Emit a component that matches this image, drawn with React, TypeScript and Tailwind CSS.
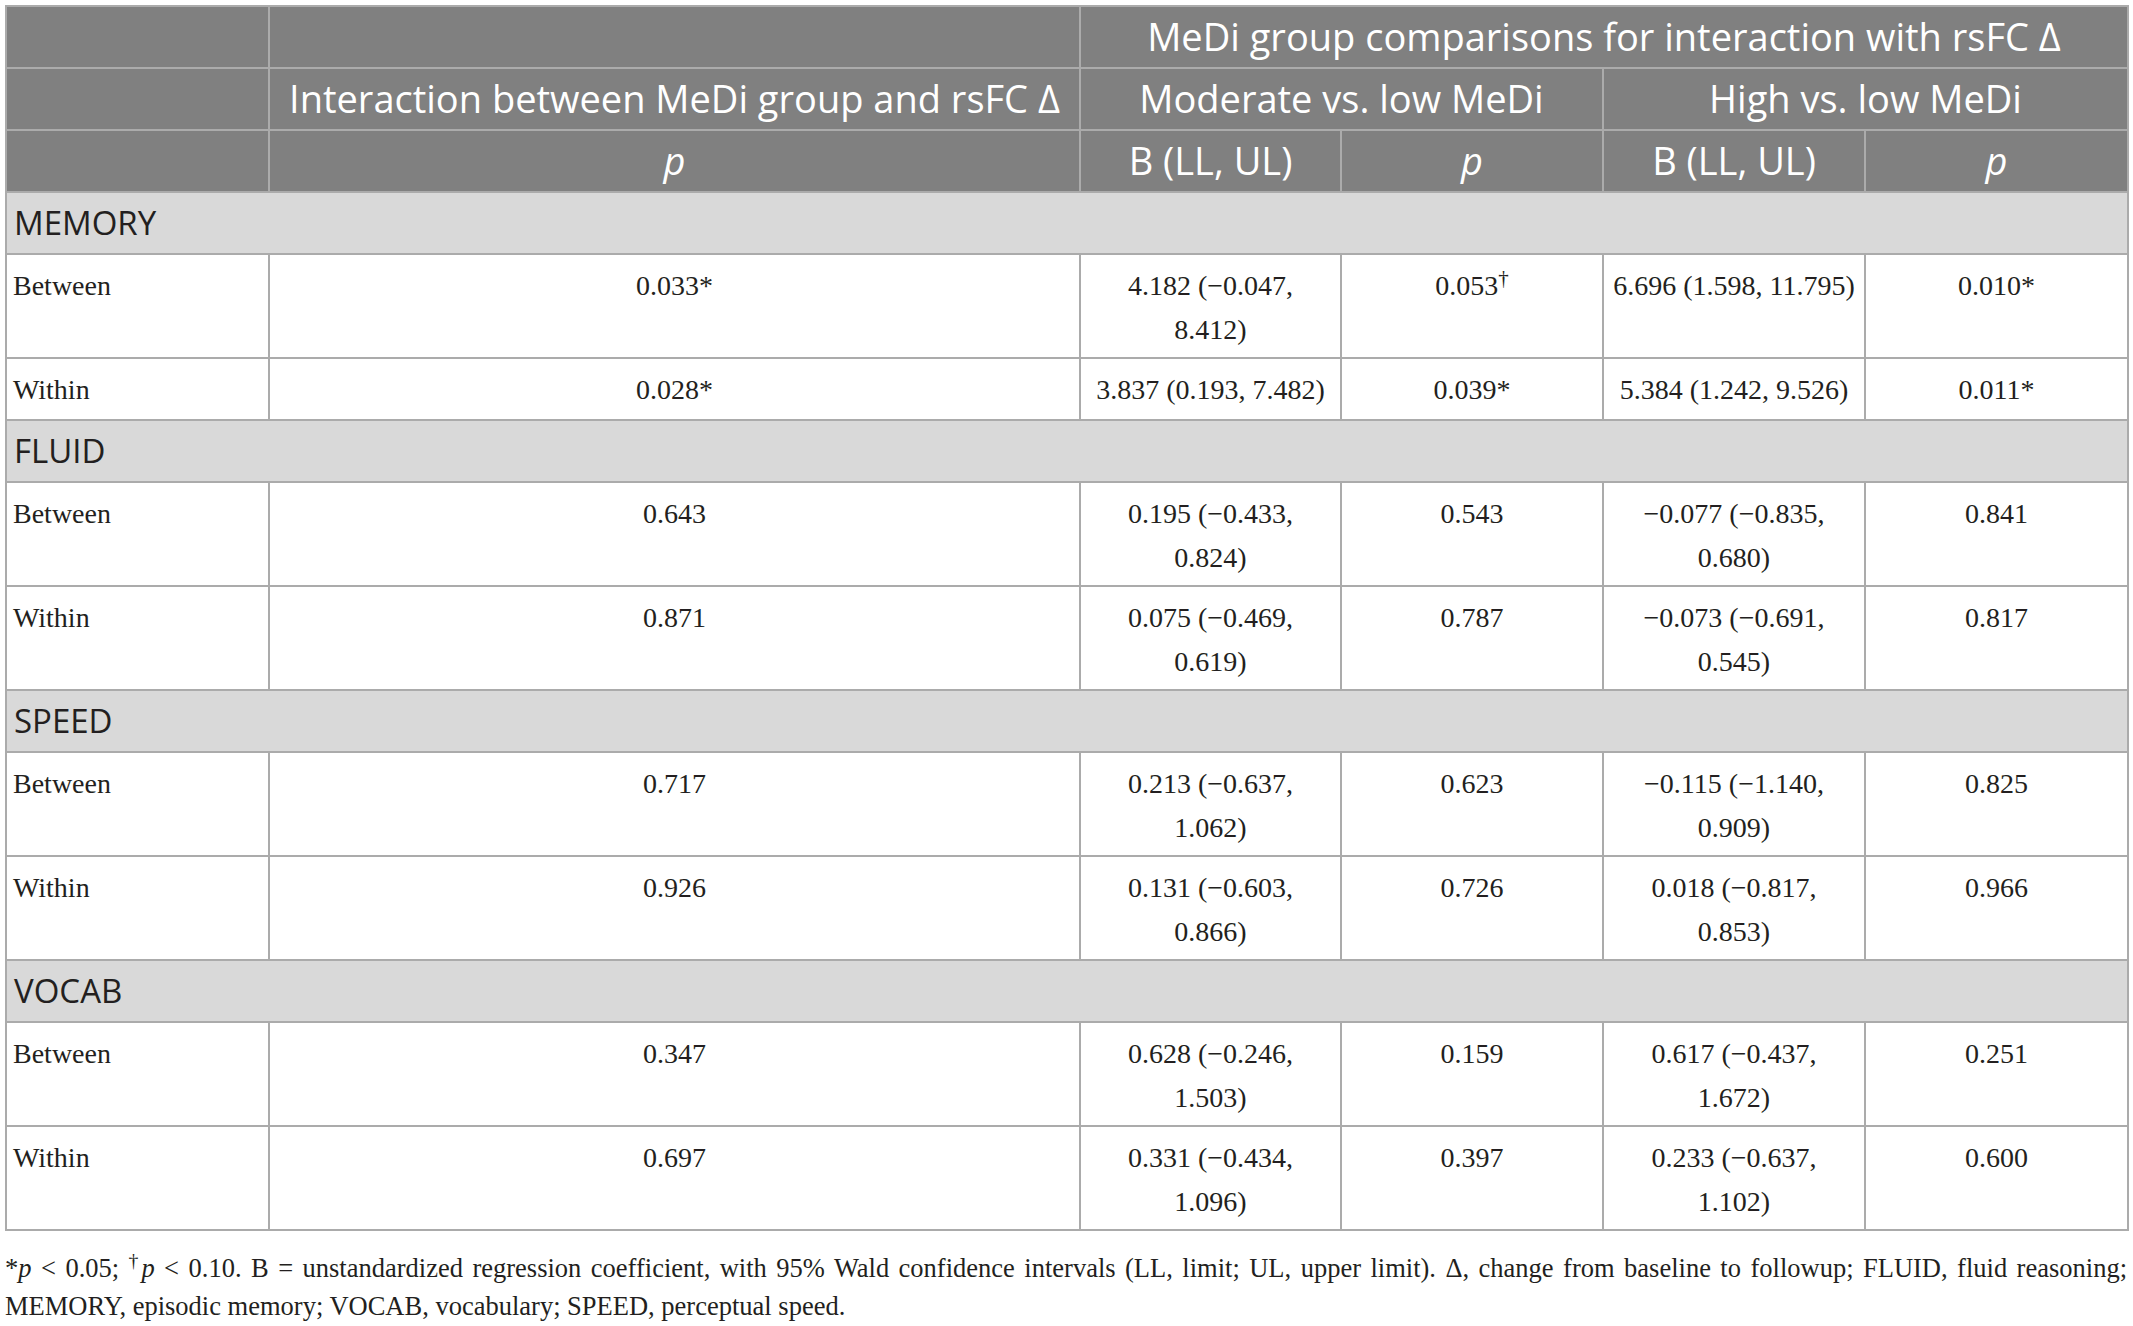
import React from 'react';

type Section = {
    name: string;
    rows: { label: string; cells: string[][] }[];
};

const sections: Section[] = [
    {
        name: 'MEMORY',
        rows: [
            { label: 'Between', cells: [['0.033*'], ['4.182 (−0.047,', '8.412)'], ['0.053†'], ['6.696 (1.598, 11.795)'], ['0.010*']] },
            { label: 'Within', cells: [['0.028*'], ['3.837 (0.193, 7.482)'], ['0.039*'], ['5.384 (1.242, 9.526)'], ['0.011*']] },
        ],
    },
    {
        name: 'FLUID',
        rows: [
            { label: 'Between', cells: [['0.643'], ['0.195 (−0.433,', '0.824)'], ['0.543'], ['−0.077 (−0.835,', '0.680)'], ['0.841']] },
            { label: 'Within', cells: [['0.871'], ['0.075 (−0.469,', '0.619)'], ['0.787'], ['−0.073 (−0.691,', '0.545)'], ['0.817']] },
        ],
    },
    {
        name: 'SPEED',
        rows: [
            { label: 'Between', cells: [['0.717'], ['0.213 (−0.637,', '1.062)'], ['0.623'], ['−0.115 (−1.140,', '0.909)'], ['0.825']] },
            { label: 'Within', cells: [['0.926'], ['0.131 (−0.603,', '0.866)'], ['0.726'], ['0.018 (−0.817,', '0.853)'], ['0.966']] },
        ],
    },
    {
        name: 'VOCAB',
        rows: [
            { label: 'Between', cells: [['0.347'], ['0.628 (−0.246,', '1.503)'], ['0.159'], ['0.617 (−0.437,', '1.672)'], ['0.251']] },
            { label: 'Within', cells: [['0.697'], ['0.331 (−0.434,', '1.096)'], ['0.397'], ['0.233 (−0.637,', '1.102)'], ['0.600']] },
        ],
    },
];

const Value: React.FC<{ text: string }> = ({ text }) =>
    text.endsWith('†') ? (
        <>
            {text.slice(0, -1)}
            <sup>†</sup>
        </>
    ) : (
        <>{text}</>
    );

const hd = 'border-2 border-[#ababab] bg-[#808080] text-white text-center align-middle h-[62px] pb-[2px] font-normal';

export default function App() {
    return (
        <div className="bg-white min-h-screen pl-[5px] pr-[6px] pt-[5px] text-[#231f20]">
            <table className="table-fixed border-collapse w-[2122px]">
                <colgroup>
                    <col className="w-[263px]" />
                    <col className="w-[811px]" />
                    <col className="w-[261px]" />
                    <col className="w-[262px]" />
                    <col className="w-[262px]" />
                    <col className="w-[263px]" />
                </colgroup>
                <thead className="font-['Open_Sans',sans-serif] text-[38px] leading-[44px]">
                    <tr>
                        <th className={hd}></th>
                        <th className={hd}></th>
                        <th className={hd} colSpan={4}>MeDi group comparisons for interaction with rsFC Δ</th>
                    </tr>
                    <tr>
                        <th className={hd}></th>
                        <th className={hd}>Interaction between MeDi group and rsFC Δ</th>
                        <th className={hd} colSpan={2}>Moderate vs. low MeDi</th>
                        <th className={hd} colSpan={2}>High vs. low MeDi</th>
                    </tr>
                    <tr>
                        <th className={hd}></th>
                        <th className={hd}><i>p</i></th>
                        <th className={hd}>B (LL, UL)</th>
                        <th className={hd}><i>p</i></th>
                        <th className={hd}>B (LL, UL)</th>
                        <th className={hd}><i>p</i></th>
                    </tr>
                </thead>
                <tbody>
                    {sections.map(section => (
                        <React.Fragment key={section.name}>
                            <tr>
                                <td
                                    colSpan={6}
                                    className="border-2 border-[#ababab] bg-[#d9d9d9] h-[62px] align-middle pl-[7px] font-['Open_Sans',sans-serif] text-[33px] leading-[40px]"
                                >
                                    {section.name}
                                </td>
                            </tr>
                            {section.rows.map(row => {
                                const tall = row.cells.some(c => c.length > 1);
                                return (
                                    <tr key={row.label} className="font-['Liberation_Serif',serif] text-[28px] leading-[44px]">
                                        <td className={`border-2 border-[#ababab] align-top pt-[9px] pl-[6px] ${tall ? 'h-[104px]' : 'h-[62px]'}`}>
                                            {row.label}
                                        </td>
                                        {row.cells.map((lines, i) => (
                                            <td key={i} className="border-2 border-[#ababab] align-top pt-[9px] text-center whitespace-nowrap">
                                                {lines.map((line, j) => (
                                                    <div key={j}>
                                                        <Value text={line} />
                                                    </div>
                                                ))}
                                            </td>
                                        ))}
                                    </tr>
                                );
                            })}
                        </React.Fragment>
                    ))}
                </tbody>
            </table>
            <div className="mt-[18px] w-[2122px] font-['Liberation_Serif',serif] text-[26.5px] leading-[38px]">
                <p className="text-justify [text-align-last:justify]">
                    *<i>p</i> &lt; 0.05; <sup>†</sup><i>p</i> &lt; 0.10. B = unstandardized regression coefficient, with 95% Wald confidence intervals (LL, limit; UL, upper limit). Δ, change from baseline to followup; FLUID, fluid reasoning;
                </p>
                <p>MEMORY, episodic memory; VOCAB, vocabulary; SPEED, perceptual speed.</p>
            </div>
        </div>
    );
}
